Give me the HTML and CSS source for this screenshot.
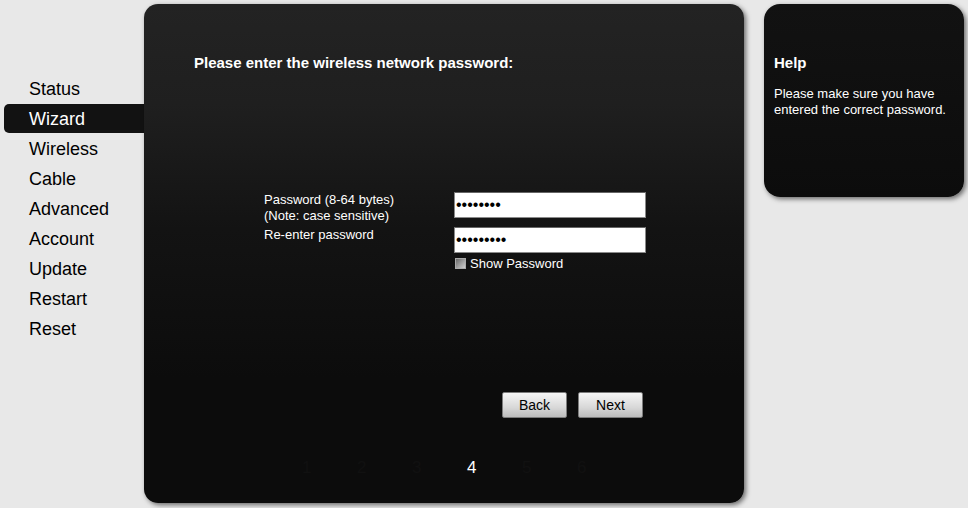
FILE: index.html
```html
<!DOCTYPE html>
<html>
<head>
<meta charset="utf-8">
<link rel="stylesheet" href="styles.css">
</head>
<body>
<div class="page">
  <nav class="nav">
    <a class="nav-item">Status</a>
    <a class="nav-item active">Wizard</a>
    <a class="nav-item">Wireless</a>
    <a class="nav-item">Cable</a>
    <a class="nav-item">Advanced</a>
    <a class="nav-item">Account</a>
    <a class="nav-item">Update</a>
    <a class="nav-item">Restart</a>
    <a class="nav-item">Reset</a>
  </nav>
  <main class="panel">
    <h1 class="title">Please enter the wireless network password:</h1>
    <div class="form">
      <div class="label">Password (8-64 bytes)<br>(Note: case sensitive)</div>
      <div class="field"><input class="input" type="password" value="12345678"></div>
      <div class="label">Re-enter password</div>
      <div class="field">
        <input class="input" type="password" value="123456789">
        <label class="show"><span class="check"></span>Show Password</label>
      </div>
    </div>
    <div class="buttons">
      <button class="btn">Back</button>
      <button class="btn">Next</button>
    </div>
    <div class="steps">
      <span class="step">1</span>
      <span class="step">2</span>
      <span class="step">3</span>
      <span class="step current">4</span>
      <span class="step">5</span>
      <span class="step">6</span>
    </div>
  </main>
  <aside class="help">
    <h2 class="help-title">Help</h2>
    <p class="help-text">Please make sure you have entered the correct password.</p>
  </aside>
</div>
</body>
</html>
```
FILE: styles.css
```css
html, body {
  margin: 0;
  padding: 0;
  background: #e8e8e8;
  font-family: "Liberation Sans", Arial, sans-serif;
}
.page {
  display: flex;
  align-items: flex-start;
  width: 968px;
  height: 508px;
  overflow: hidden;
}
.nav {
  width: 144px;
  padding-top: 74px;
  display: flex;
  flex-direction: column;
}
.nav-item {
  display: block;
  height: 30px;
  line-height: 30px;
  margin-left: 4px;
  padding-left: 25px;
  font-size: 18px;
  color: #000;
  border-radius: 5px 0 0 5px;
}
.nav-item.active {
  background: #121212;
  color: #fff;
  height: 29px;
  line-height: 30px;
  margin-bottom: 1px;
}
.panel {
  margin-top: 4px;
  width: 600px;
  height: 499px;
  box-sizing: border-box;
  border-radius: 14px;
  background: linear-gradient(#232323 0, #1f1f1f 20%, #131313 45%, #0c0c0c 75%, #0c0c0c 100%);
  box-shadow: 2px 2px 5px rgba(0,0,0,0.55);
  padding: 51px 0 0 50px;
  display: flex;
  flex-direction: column;
  color: #fff;
}
.title {
  margin: 0;
  font-size: 15px;
  font-weight: bold;
  line-height: 16px;
  color: #fff;
}
.form {
  margin: 121px 0 0 70px;
  display: grid;
  grid-template-columns: 190px 192px;
  row-gap: 3px;
}
.label {
  font-size: 13px;
  line-height: 16px;
  color: #fff;
}
.field {
  display: flex;
  flex-direction: column;
}
.input {
  box-sizing: border-box;
  width: 192px;
  height: 26px;
  margin: 0;
  border: 1px solid #8a8a8a;
  border-top-color: #666;
  background: #fff;
  font-family: "Liberation Sans", Arial, sans-serif;
  font-size: 16px;
  padding: 0 1px;
  color: #000;
}
.show {
  display: flex;
  align-items: center;
  margin-top: 3px;
  font-size: 13px;
  line-height: 15px;
  color: #fff;
}
.check {
  width: 9px;
  height: 9px;
  border: 1px solid #aaa;
  background: linear-gradient(135deg, #6a6a6a, #cfcfcf);
  margin: 0 4px 0 1px;
}
.buttons {
  display: flex;
  gap: 11px;
  margin: 121px 0 0 308px;
}
.btn {
  width: 65px;
  height: 26px;
  box-sizing: border-box;
  border: 1px solid #7c7c7c;
  border-radius: 2px;
  background: linear-gradient(#f6f6f6, #d8d8d8 60%, #bdbdbd);
  font-family: "Liberation Sans", Arial, sans-serif;
  font-size: 14px;
  color: #000;
  padding: 0;
}
.steps {
  display: flex;
  margin: 40px 0 0 108px;
}
.step {
  width: 55px;
  font-size: 17px;
  line-height: 20px;
  color: #111;
}
.step.current { color: #fff; }
.help {
  margin: 4px 0 0 20px;
  width: 200px;
  height: 193px;
  box-sizing: border-box;
  border-radius: 16px;
  background: linear-gradient(#121212, #0c0c0c);
  box-shadow: 2px 2px 5px rgba(0,0,0,0.55);
  padding: 50px 10px 0 10px;
  color: #fff;
}
.help-title {
  margin: 0;
  font-size: 15px;
  font-weight: bold;
  line-height: 18px;
}
.help-text {
  margin: 14px 0 0 0;
  font-size: 13px;
  line-height: 16px;
}
```
